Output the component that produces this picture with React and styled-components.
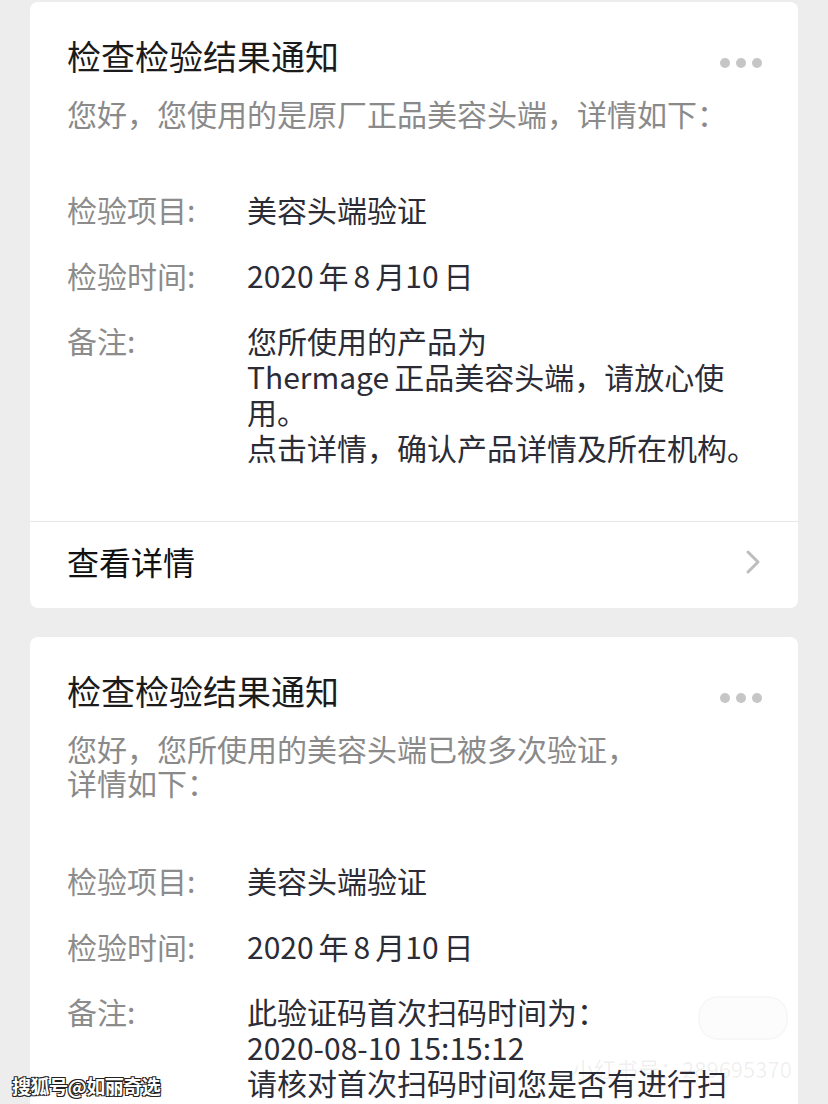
import styled, { createGlobalStyle } from "styled-components";

const GlobalStyle = createGlobalStyle`
  html, body {
    margin: 0;
    padding: 0;
    overflow: hidden;
    background: #ededed;
  }
  body {
    font-family: "Noto Sans CJK SC", "Noto Sans", sans-serif;
  }
`;

const Page = styled.div`
  position: relative;
  width: 828px;
  height: 1104px;
  overflow: hidden;
  box-sizing: border-box;
  padding: 2px 30px 0 30px;
  display: flex;
  flex-direction: column;
  gap: 29px;
  background: #ededed;
`;

const Card = styled.div`
  background: #fff;
  border-radius: 8px;
  flex-shrink: 0;
`;

const Body = styled.div`
  padding: 30px 36px 56px 37px;
`;

const Head = styled.div`
  display: flex;
  justify-content: space-between;
  align-items: flex-start;
`;

const Title = styled.div`
  font-size: 34px;
  line-height: 48px;
  color: #1b1b1b;
`;

const Dots = styled.div`
  display: flex;
  gap: 6px;
  margin-top: 26px;
`;

const Dot = styled.span`
  width: 10px;
  height: 10px;
  border-radius: 50%;
  background: #c6c6c6;
`;

const Sub = styled.div`
  margin-top: 16px;
  font-size: 30px;
  line-height: 34px;
  color: #8a8a8a;
`;

const Rows = styled.div`
  margin-top: ${(p) => p.$top}px;
  display: flex;
  flex-direction: column;
  gap: 30px;
`;

const Row = styled.div`
  display: flex;
  font-size: 30px;
  line-height: 35.5px;
`;

const Label = styled.div`
  width: 180px;
  flex-shrink: 0;
  color: #8c8c8c;
`;

const Value = styled.div`
  color: #2c2c36;
`;

const Footer = styled.div`
  border-top: 1px solid #e6e6e6;
  height: 86px;
  padding: 0 36px 0 37px;
  display: flex;
  align-items: center;
  justify-content: space-between;
`;

const More = styled.div`
  font-size: 32px;
  color: #111;
  margin-top: -8px;
`;

const SohuMark = styled.div`
  position: absolute;
  left: 12px;
  top: 1072px;
  font-size: 19px;
  font-weight: 700;
  color: #fff;
  letter-spacing: -0.5px;
  text-shadow: -1px -1px 0 #222, 1px -1px 0 #222, -1px 1px 0 #222, 1px 1px 0 #222;
`;

const FaintMark = styled.div`
  position: absolute;
  left: 572px;
  top: 1052px;
  font-size: 22px;
  color: rgba(0, 0, 0, 0.07);
  white-space: nowrap;
`;

const FaintBadge = styled.div`
  position: absolute;
  left: 698px;
  top: 996px;
  width: 86px;
  height: 40px;
  border-radius: 20px;
  border: 2px solid rgba(0, 0, 0, 0.025);
  background: rgba(0, 0, 0, 0.012);
`;

const Chevron = () => (
  <svg width="18" height="26" viewBox="0 0 18 26" style={{ marginTop: -6 }}>
    <path d="M4 3 L14 13 L4 23" fill="none" stroke="#bdbdbd" strokeWidth="3" strokeLinecap="round" strokeLinejoin="round" />
  </svg>
);

const Notice = ({ sub, rows, rowTop, footer }) => (
  <Card>
    <Body>
      <Head>
        <Title>检查检验结果通知</Title>
        <Dots>
          <Dot />
          <Dot />
          <Dot />
        </Dots>
      </Head>
      <Sub>{sub}</Sub>
      <Rows $top={rowTop}>
        {rows.map((r) => (
          <Row key={r.label}>
            <Label>{r.label}</Label>
            <Value>{r.value}</Value>
          </Row>
        ))}
      </Rows>
    </Body>
    {footer && (
      <Footer>
        <More>查看详情</More>
        <Chevron />
      </Footer>
    )}
  </Card>
);

const date = "2020\u2006年\u20068\u2006月10\u2006日";

const App = () => {
  return (
    <>
      <GlobalStyle />
      <Page>
        <Notice
          sub="您好，您使用的是原厂正品美容头端，详情如下："
          rowTop={62}
          footer
          rows={[
            { label: "检验项目:", value: "美容头端验证" },
            { label: "检验时间:", value: date },
            {
              label: "备注:",
              value: (
                <>
                  您所使用的产品为
                  <br />
                  Thermage{"\u2006"}正品美容头端，请放心使
                  <br />
                  用。
                  <br />
                  点击详情，确认产品详情及所在机构。
                </>
              ),
            },
          ]}
        />
        <Notice
          sub={
            <>
              您好，您所使用的美容头端已被多次验证，
              <br />
              详情如下：
            </>
          }
          rowTop={64}
          rows={[
            { label: "检验项目:", value: "美容头端验证" },
            { label: "检验时间:", value: date },
            {
              label: "备注:",
              value: (
                <>
                  此验证码首次扫码时间为：
                  <br />
                  2020-08-10 15:15:12
                  <br />
                  请核对首次扫码时间您是否有进行扫
                  <br />
                  码。
                </>
              ),
            },
          ]}
        />
        <FaintBadge />
        <FaintMark>小红书号：289695370</FaintMark>
        <SohuMark>搜狐号@如丽奇选</SohuMark>
      </Page>
    </>
  );
};

export default App;
